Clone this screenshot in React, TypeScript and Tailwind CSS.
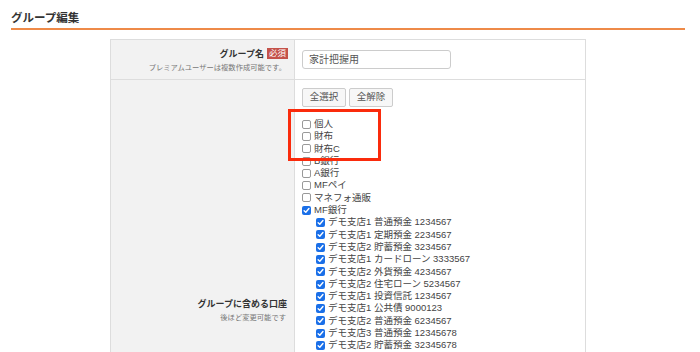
import React from "react";

const topItems = ["個人", "財布", "財布C", "B銀行", "A銀行", "MFペイ", "マネフォ通販"];
const subItems = [
  "デモ支店1 普通預金 1234567",
  "デモ支店1 定期預金 2234567",
  "デモ支店2 貯蓄預金 3234567",
  "デモ支店1 カードローン 3333567",
  "デモ支店2 外貨預金 4234567",
  "デモ支店2 住宅ローン 5234567",
  "デモ支店1 投資信託 1234567",
  "デモ支店1 公共債 9000123",
  "デモ支店2 普通預金 6234567",
  "デモ支店3 普通預金 12345678",
  "デモ支店2 貯蓄預金 32345678",
];

function Box({ checked }: { checked?: boolean }) {
  if (checked) {
    return (
      <span className="inline-flex w-[9px] h-[9px] rounded-[2px] bg-[#1a6fe8] items-center justify-center shrink-0">
        <svg width="7" height="7" viewBox="0 0 8 8">
          <path d="M1.3 4.2 L3.2 6 L6.8 1.8" stroke="white" strokeWidth="1.6" fill="none" strokeLinecap="round" strokeLinejoin="round" />
        </svg>
      </span>
    );
  }
  return <span className="inline-block w-[9px] h-[9px] rounded-[2px] border border-[#999] bg-white shrink-0" />;
}

export default function App() {
  return (
    <div
      className="w-[700px] h-[352px] overflow-hidden bg-white text-[#333]"
      style={{ fontFamily: '"Liberation Sans", "Noto Sans CJK JP", sans-serif' }}
    >
      <div className="ml-[11px] mr-[15px] pt-[10px]">
        <div className="text-[11.5px] leading-[16px] font-bold text-[#333] pb-[2px] border-b-2 border-[#ee8a48]">グループ編集</div>
      </div>
      <div className="ml-[110px] mt-[9px] w-[476px] border border-[#ddd]">
        <div className="flex h-[40px] border-b border-[#ddd]">
          <div className="w-[184px] bg-[#f2f2f2] border-r border-[#ddd] flex flex-col items-end justify-center pr-[6px]">
            <div className="flex items-center gap-[3px] leading-[16px]">
              <span className="text-[9px] font-bold text-[#333]">グループ名</span>
              <span className="text-[8.5px] leading-[11px] px-[2px] bg-[#c4524a] text-white">必須</span>
            </div>
            <div className="text-[7.3px] leading-[12px] text-[#777] mr-[2px]">プレミアムユーザーは複数作成可能です。</div>
          </div>
          <div className="flex-1 flex items-center pl-[7px]">
            <div className="w-[149px] h-[19px] border border-[#ccc] rounded-[3px] flex items-center pl-[6px] text-[10px] text-[#555]">家計把握用</div>
          </div>
        </div>
        <div className="flex h-[460px]">
          <div className="w-[184px] bg-[#f2f2f2] border-r border-[#ddd] flex flex-col items-end justify-center pr-[7px]">
            <div className="text-[9px] leading-[16px] font-bold text-[#333]">グループに含める口座</div>
            <div className="text-[7.3px] leading-[12px] text-[#777] mr-[1px]">後ほど変更可能です</div>
          </div>
          <div className="flex-1 pl-[7px] pt-[8px] relative">
            <div className="flex gap-[3px]">
              <button className="w-[44px] h-[19px] border border-[#ccc] rounded-[2px] bg-[#f7f7f7] text-[9.5px] text-[#555]">全選択</button>
              <button className="w-[44px] h-[19px] border border-[#ccc] rounded-[2px] bg-[#f7f7f7] text-[9.5px] text-[#555]">全解除</button>
            </div>
            <div className="mt-[11px] text-[9.5px] leading-[12.3px] text-[#444]">
              {topItems.map((t) => (
                <div key={t} className="flex items-center gap-[3px]">
                  <Box />
                  <span>{t}</span>
                </div>
              ))}
              <div className="flex items-center gap-[3px]">
                <Box checked />
                <span>MF銀行</span>
              </div>
              {subItems.map((t) => (
                <div key={t} className="flex items-center gap-[3px] pl-[14px]">
                  <Box checked />
                  <span>{t}</span>
                </div>
              ))}
            </div>
            <div className="absolute left-[-7px] top-[29px] w-[93px] h-[52px] border-[3px] border-[#fa2b0c]" />
          </div>
        </div>
      </div>
    </div>
  );
}
